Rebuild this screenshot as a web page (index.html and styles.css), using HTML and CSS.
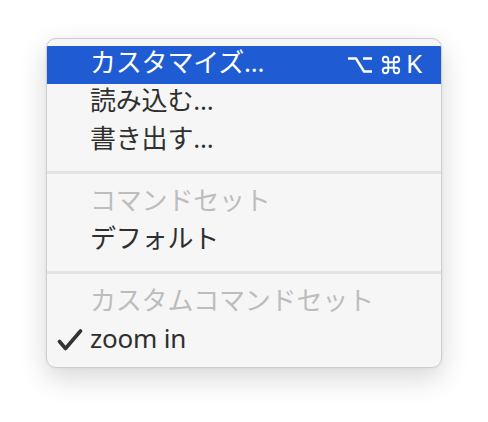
FILE: index.html
```html
<!DOCTYPE html>
<html lang="ja">
<head>
<meta charset="utf-8">
<link rel="stylesheet" href="styles.css">
</head>
<body>
<div class="menu">
  <div class="item selected">
    <span class="check"></span>
    <span class="label">カスタマイズ...</span>
    <span class="shortcut">
      <svg class="key-opt" viewBox="0 0 24 16" width="24" height="16"><path d="M0 1.5H8L16 14.5H24M15 1.5H24" fill="none" stroke="#fff" stroke-width="2.4"/></svg>
      <svg class="key-cmd" viewBox="0 0 24 24" width="22" height="22"><path d="M9 9H15V15H9Z M9 9V6a3 3 0 1 0-3 3h3 M15 9V6a3 3 0 1 1 3 3h-3 M9 15v3a3 3 0 1 1-3-3h3 M15 15v3a3 3 0 1 0 3-3h-3" fill="none" stroke="#fff" stroke-width="2"/></svg>
      <span class="key-k">K</span>
    </span>
  </div>
  <div class="item"><span class="check"></span><span class="label">読み込む...</span></div>
  <div class="item"><span class="check"></span><span class="label">書き出す...</span></div>
  <div class="sep"></div>
  <div class="item disabled"><span class="check"></span><span class="label">コマンドセット</span></div>
  <div class="item"><span class="check"></span><span class="label">デフォルト</span></div>
  <div class="sep"></div>
  <div class="item disabled"><span class="check"></span><span class="label">カスタムコマンドセット</span></div>
  <div class="item">
    <span class="check"><svg viewBox="0 0 26 22" width="26" height="22"><path d="M2.5 12.5L8.5 19.5L23.5 2" fill="none" stroke="#333" stroke-width="3.6" stroke-linecap="round" stroke-linejoin="round"/></svg></span>
    <span class="label">zoom in</span>
  </div>
</div>
</body>
</html>
```
FILE: styles.css
```css
html {
  margin: 0;
  background: #ffffff;
}
body {
  margin: 0;
  min-height: 422px;
  box-sizing: border-box;
  padding: 38px 0 0 46px;
  font-family: "Noto Sans", "Noto Sans CJK JP", sans-serif;
  font-size: 26px;
}
.menu {
  box-sizing: border-box;
  width: 396px;
  height: 330px;
  background: #f6f6f6;
  border: 1px solid #cfcfcf;
  border-radius: 10px;
  box-shadow: 0 10px 28px rgba(0, 0, 0, 0.16), 0 0 3px rgba(0, 0, 0, 0.06);
  padding: 7px 0 7px 0;
  overflow: hidden;
}
.item {
  box-sizing: border-box;
  height: 38px;
  padding-bottom: 5px;
  display: flex;
  align-items: center;
  color: #2f2f2f;
  line-height: 33px;
  white-space: nowrap;
}
.check {
  width: 43px;
  flex: none;
  display: flex;
  align-items: center;
  padding-left: 10px;
  padding-top: 3px;
  box-sizing: border-box;
}
.label {
  flex: 1;
  letter-spacing: -0.2px;
}
.selected {
  background: #1f5bd2;
  color: #ffffff;
}
.disabled {
  color: #bdbdbd;
}
.shortcut {
  display: flex;
  align-items: center;
  padding-right: 19px;
  padding-top: 4px;
}
.key-opt {
  margin-right: 8px;
}
.key-cmd {
  margin-right: 4px;
}
.key-k {
  font-family: "Noto Sans", sans-serif;
  line-height: 22px;
  margin-top: -4px;
}
.sep {
  height: 24px;
  display: flex;
  align-items: center;
}
.sep::before {
  content: "";
  display: block;
  width: 100%;
  height: 3px;
  background: #e3e3e3;
}
```
